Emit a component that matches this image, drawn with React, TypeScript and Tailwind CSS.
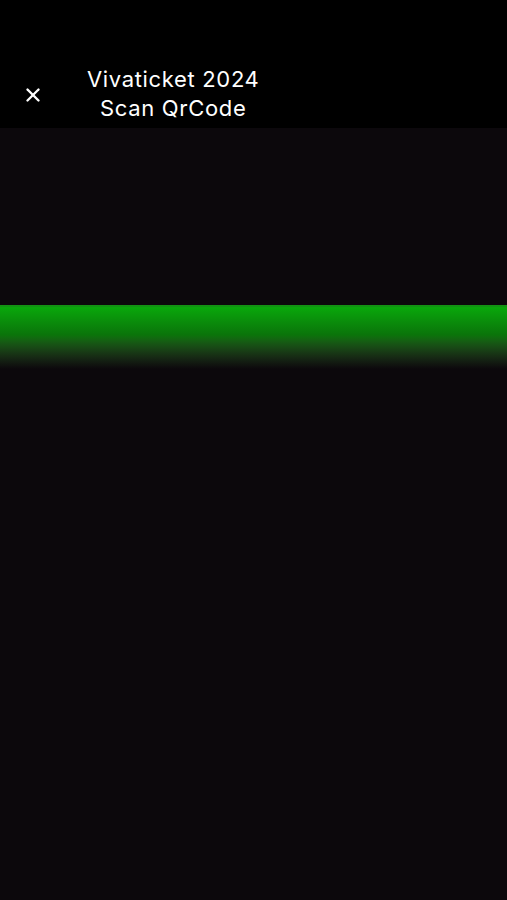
import { X } from "lucide-react";

export default function App() {
  return (
    <div className="flex h-[900px] w-full flex-col bg-[#0c080c] font-['Inter',sans-serif]">
      <header className="flex h-[128px] shrink-0 items-end bg-black pb-[5px]">
        <button type="button" className="ml-[22px] mb-[17px] text-white">
          <X className="h-[22px] w-[22px]" strokeWidth={2.6} />
        </button>
        <div className="ml-[43px] text-center text-[22px] leading-[29px] tracking-[0.03em] text-white">
          <div>Vivaticket 2024</div>
          <div>Scan QrCode</div>
        </div>
      </header>
      <main className="flex flex-1 flex-col">
        <div className="h-[177px]" />
        <div className="h-[2px] bg-[#139213]" />
        <div className="h-[62px] bg-gradient-to-b from-[#09a80b] via-[#0a740a] via-45% to-[#0c080c]" />
      </main>
    </div>
  );
}
